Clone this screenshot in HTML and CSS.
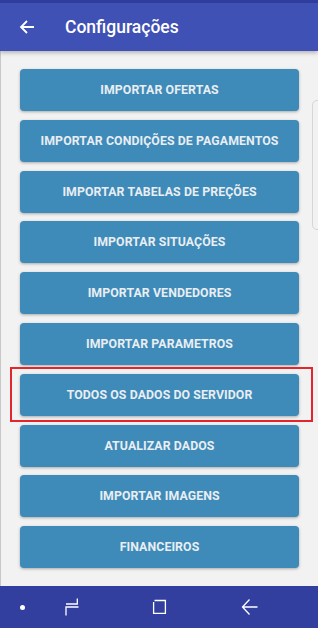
FILE: index.html
```html
<!DOCTYPE html>
<html lang="pt">
<head>
    <meta charset="UTF-8">
    <meta name="viewport" content="width=device-width, initial-scale=1.0">
    <title>Configurações</title>
    <link rel="stylesheet" href="styles.css">
</head>
<body>
    <div class="screen">
        <div class="status"></div>
        <header class="toolbar">
            <svg class="back" width="16" height="16" viewBox="0 0 16 16">
                <path d="M15 8H2M8 2L2 8l6 6" fill="none" stroke="#fff" stroke-width="1.8"/>
            </svg>
            <h1>Configurações</h1>
        </header>
        <main class="content">
            <button class="btn">IMPORTAR OFERTAS</button>
            <button class="btn">IMPORTAR CONDIÇÕES DE PAGAMENTOS</button>
            <button class="btn">IMPORTAR TABELAS DE PREÇÕES</button>
            <button class="btn">IMPORTAR SITUAÇÕES</button>
            <button class="btn">IMPORTAR VENDEDORES</button>
            <button class="btn">IMPORTAR PARAMETROS</button>
            <button class="btn">TODOS OS DADOS DO SERVIDOR</button>
            <button class="btn">ATUALIZAR DADOS</button>
            <button class="btn">IMPORTAR IMAGENS</button>
            <button class="btn">FINANCEIROS</button>
            <div class="highlight"></div>
            <div class="edge"></div>
        </main>
        <nav class="navbar">
            <span class="dot"></span>
            <svg class="nav-recent" width="16" height="18" viewBox="0 0 16 18">
                <path d="M14.3 0.5V6H3M3 17.5V9H15.5" fill="none" stroke="#fff" stroke-width="1.3"/>
            </svg>
            <svg class="nav-home" width="15" height="16" viewBox="0 0 15 16">
                <path d="M2.5 1.5H13.4V14.4H1.6V3" fill="none" stroke="#fff" stroke-width="1.3"/>
            </svg>
            <svg class="nav-back" width="17" height="18" viewBox="0 0 17 18">
                <path d="M16.5 9H1.5M8.5 1.5L1.5 9l7 7.5" fill="none" stroke="#fff" stroke-width="1.3"/>
            </svg>
        </nav>
    </div>
</body>
</html>
```

FILE: styles.css
```css
body {
    margin: 0;
    padding: 0;
    font-family: Roboto, "Noto Sans", Arial, sans-serif;
    background: #f2f2f2;
}
.screen {
    width: 318px;
    height: 628px;
    display: flex;
    flex-direction: column;
    overflow: hidden;
}
.status {
    height: 3px;
    background: #303f9f;
}
.toolbar {
    height: 48px;
    background: #3f51b5;
    display: flex;
    align-items: center;
    padding-left: 19px;
    box-shadow: 0 2px 4px rgba(0, 0, 0, 0.25);
    position: relative;
    z-index: 2;
}
.back {
    display: block;
}
.toolbar h1 {
    margin: 0 0 0 30px;
    font-size: 17.5px;
    font-weight: 500;
    color: #fff;
}
.content {
    flex: 1;
    display: flex;
    flex-direction: column;
    gap: 8.8px;
    padding: 18px 19px 0 19px;
    border-left: 1px solid #c8c8c8;
    position: relative;
}
.btn {
    height: 42px;
    flex: none;
    border: none;
    border-radius: 4px;
    background: #3e8ab8;
    color: #e9eef3;
    font-family: Roboto, "Noto Sans", Arial, sans-serif;
    font-size: 12.3px;
    font-weight: 700;
    letter-spacing: 0.1px;
    box-shadow: 0 1px 3px rgba(0, 0, 0, 0.3);
    padding: 0;
}
.highlight {
    position: absolute;
    left: 9px;
    top: 316px;
    width: 299px;
    height: 51px;
    border: 2px solid #e3262e;
    pointer-events: none;
}
.edge {
    position: absolute;
    right: -6px;
    top: 49px;
    width: 10px;
    height: 128px;
    border: 1px solid #d6d6d6;
    border-radius: 5px;
}
.navbar {
    height: 42px;
    background: #333f9f;
    display: flex;
    align-items: center;
    padding-left: 20px;
}
.navbar svg {
    display: block;
}
.navbar .dot {
    width: 5px;
    height: 5px;
    border-radius: 50%;
    background: #fff;
}
.nav-recent {
    margin-left: 38px;
}
.nav-home {
    margin-left: 73px;
}
.nav-back {
    margin-left: 74px;
}
```
